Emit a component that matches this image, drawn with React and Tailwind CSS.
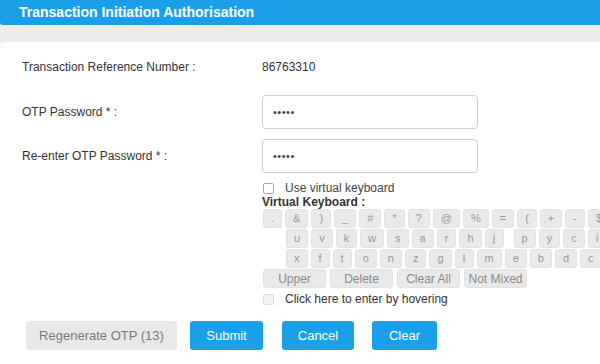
const row1 = [".", "&", ")", "_", "#", "*", "?", "@", "%", "=", "(", "+", "-", "$", "^"];
const row2 = ["u", "v", "k", "w", "s", "a", "r", "h", "j", null, "p", "y", "c", "i", "q"];
const row3 = ["x", "f", "t", "o", "n", "z", "g", "l", "m", "e", "b", "d", "c", "q"];

const Key = ({ k }) => (
  <div className="h-[19px] min-w-[19px] px-[7px] shrink-0 rounded-[3px] bg-[#e9e9e9] border border-[#e2e2e2] text-[11px] text-[#9a9a9a] flex items-center justify-center">
    {k}
  </div>
);

const Box = ({ light }) => (
  <span
    className={
      "w-[11px] h-[11px] rounded-[2px] border " +
      (light ? "border-[#dcdcdc] bg-[#f2f2f2]" : "border-[#a9a9a9] bg-white")
    }
  />
);

const App = () => {
  return (
    <div className="w-[600px] h-[364px] bg-[#ececec] overflow-hidden font-['Liberation_Sans',Arial,sans-serif] text-[#333]">
      {/* Title bar */}
      <div className="h-[25px] bg-[#1a9fe8] pl-[19px] flex items-center text-white text-[14px] font-bold rounded-bl-[3px]">
        Transaction Initiation Authorisation
      </div>

      <div className="mt-[17px] h-[322px] bg-white rounded-tl-[4px] pl-[22px] text-[12px]">
        {/* Reference number */}
        <div className="pt-[18px] flex items-center h-[32px]">
          <div className="w-[240px]">Transaction Reference Number :</div>
          <div>86763310</div>
        </div>

        {/* OTP */}
        <div className="mt-[21px] flex items-center h-[34px]">
          <div className="w-[240px]">OTP Password * :</div>
          <div className="w-[216px] h-[34px] border border-[#cfcfcf] rounded-[4px] pl-[10px] flex items-center text-[11px] tracking-[0.5px] text-[#444]">
            •••••
          </div>
        </div>

        <div className="mt-[10px] flex items-center h-[34px]">
          <div className="w-[240px]">Re-enter OTP Password * :</div>
          <div className="w-[216px] h-[34px] border border-[#cfcfcf] rounded-[4px] pl-[10px] flex items-center text-[11px] tracking-[0.5px] text-[#444]">
            •••••
          </div>
        </div>

        {/* Virtual keyboard */}
        <div className="ml-[241px]">
          <div className="mt-[8px] h-[14px] flex items-center">
            <Box />
            <span className="ml-[11px] text-[#444]">Use virtual keyboard</span>
          </div>
          <div className="h-[13px] flex items-center font-bold text-[12px] text-[#333] -ml-[1px]">
            Virtual Keyboard :
          </div>

          <div className="mt-[1px] flex flex-col gap-[1px]">
            <div className="flex gap-[3px]">
              {row1.map((k, i) => (
                <Key key={i} k={k} />
              ))}
            </div>
            <div className="flex gap-[3px]">
              <div className="w-[20px] shrink-0" />
              {row2.map((k, i) =>
                k ? <Key key={i} k={k} /> : <div key={i} className="w-[4px] shrink-0" />
              )}
            </div>
            <div className="flex gap-[3px]">
              <div className="w-[20px] shrink-0" />
              {row3.map((k, i) => (
                <Key key={i} k={k} />
              ))}
            </div>
            <div className="flex gap-[4px]">
              {["Upper", "Delete", "Clear All", "Not Mixed"].map((b) => (
                <div
                  key={b}
                  className="w-[63px] h-[19px] rounded-[3px] bg-[#e9e9e9] border border-[#e2e2e2] text-[12px] text-[#8a8a8a] flex items-center justify-center"
                >
                  {b}
                </div>
              ))}
            </div>
          </div>

          <div className="mt-[4px] h-[14px] flex items-center">
            <Box light />
            <span className="ml-[11px] text-[#333]">Click here to enter by hovering</span>
          </div>
        </div>

        {/* Actions */}
        <div className="mt-[15px] flex items-center text-[13px]">
          <button className="ml-[4px] w-[151px] h-[29px] rounded-[3px] bg-[#e8e8e8] text-[#7a7a7a]">
            Regenerate OTP (13)
          </button>
          <button className="ml-[13px] w-[73px] h-[29px] rounded-[3px] bg-[#1a9fe8] text-white">
            Submit
          </button>
          <button className="ml-[19px] w-[72px] h-[29px] rounded-[3px] bg-[#1a9fe8] text-white">
            Cancel
          </button>
          <button className="ml-[18px] w-[65px] h-[29px] rounded-[3px] bg-[#1a9fe8] text-white">
            Clear
          </button>
        </div>
      </div>
    </div>
  );
};

export default App;
